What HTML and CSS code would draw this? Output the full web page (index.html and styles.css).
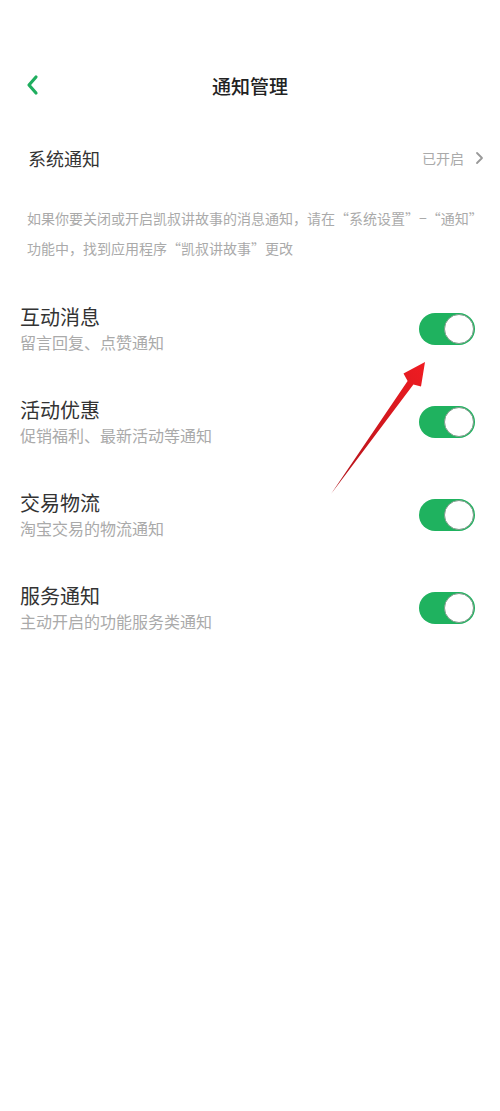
FILE: index.html
```html
<!DOCTYPE html>
<html lang="zh-CN">
<head>
    <meta charset="UTF-8">
    <meta name="viewport" content="width=device-width, initial-scale=1.0">
    <title>通知管理</title>
    <link rel="stylesheet" href="styles.css">
</head>
<body>
    <div class="page">
        <div class="header">
            <svg class="back" width="14" height="22" viewBox="0 0 14 22">
                <path d="M11 3 L4 11 L11 19" fill="none" stroke="#1fae5f" stroke-width="3.2" stroke-linecap="round" stroke-linejoin="round"/>
            </svg>
            <h1>通知管理</h1>
        </div>

        <div class="system-row">
            <span class="system-label">系统通知</span>
            <span class="system-state">已开启
                <svg class="chevron" width="10" height="14" viewBox="0 0 10 14">
                    <path d="M3 2 L8 7 L3 12" fill="none" stroke="#999" stroke-width="1.8" stroke-linecap="round" stroke-linejoin="round"/>
                </svg>
            </span>
        </div>

        <p class="note">如果你要关闭或开启凯叔讲故事的消息通知，请在“系统设置”−“通知”功能中，找到应用程序“凯叔讲故事”更改</p>

        <div class="list">
            <div class="item">
                <div class="item-text">
                    <div class="item-title">互动消息</div>
                    <div class="item-sub">留言回复、点赞通知</div>
                </div>
                <div class="toggle"><span class="knob"></span></div>
            </div>
            <div class="item">
                <div class="item-text">
                    <div class="item-title">活动优惠</div>
                    <div class="item-sub">促销福利、最新活动等通知</div>
                </div>
                <div class="toggle"><span class="knob"></span></div>
            </div>
            <div class="item">
                <div class="item-text">
                    <div class="item-title">交易物流</div>
                    <div class="item-sub">淘宝交易的物流通知</div>
                </div>
                <div class="toggle"><span class="knob"></span></div>
            </div>
            <div class="item">
                <div class="item-text">
                    <div class="item-title">服务通知</div>
                    <div class="item-sub">主动开启的功能服务类通知</div>
                </div>
                <div class="toggle"><span class="knob"></span></div>
            </div>
        </div>

        <!-- annotation arrow drawn over the list -->
        <svg class="arrow" width="105" height="145" viewBox="0 0 105 145">
            <defs>
                <linearGradient id="red" x1="0" y1="1" x2="1" y2="0">
                    <stop offset="0" stop-color="#b0131a"/>
                    <stop offset="1" stop-color="#f01c22"/>
                </linearGradient>
            </defs>
            <polygon points="6,139 82.6,26 78.5,18.5 100,7 96,31.5 88.4,29.6" fill="url(#red)"/>
        </svg>
    </div>
</body>
</html>
```

FILE: styles.css
```css
body {
    margin: 0;
    background-color: #ffffff;
    font-family: "Noto Sans CJK SC", "Noto Sans", sans-serif;
    color: #333333;
}
.page {
    position: relative;
    padding-top: 60px;
}
.header {
    position: relative;
    height: 50px;
    display: flex;
    align-items: center;
    justify-content: center;
}
.header h1 {
    margin: 0;
    font-size: 19px;
    font-weight: 500;
    color: #222222;
}
.back {
    position: absolute;
    left: 25px;
    top: 14px;
}
.system-row {
    height: 56px;
    margin-top: 20px;
    padding: 0 16px 0 28px;
    display: flex;
    align-items: center;
    justify-content: space-between;
}
.system-label {
    font-size: 18px;
    color: #333333;
}
.system-state {
    display: flex;
    align-items: center;
    gap: 10px;
    font-size: 14px;
    color: #aaaaaa;
}
.note {
    margin: 17px 0 0;
    padding: 0 20px 0 27px;
    font-size: 14px;
    line-height: 30px;
    color: #aaaaaa;
}
.list {
    margin-top: 19px;
}
.item {
    height: 93px;
    padding: 0 25px 0 20px;
    display: flex;
    align-items: center;
    justify-content: space-between;
    box-sizing: border-box;
}
.item-title {
    font-size: 20px;
    line-height: 26px;
    color: #333333;
}
.item-sub {
    font-size: 16px;
    line-height: 24px;
    color: #aaaaaa;
}
.toggle {
    width: 56px;
    height: 32px;
    border-radius: 16px;
    background-color: #1fb25f;
    display: flex;
    align-items: center;
    justify-content: flex-end;
    padding: 0 1px;
    box-sizing: border-box;
}
.knob {
    width: 28px;
    height: 28px;
    border-radius: 50%;
    background-color: #ffffff;
    border: 1px solid #7f9a8a;
}
.arrow {
    position: absolute;
    left: 325px;
    top: 355px;
}
```
